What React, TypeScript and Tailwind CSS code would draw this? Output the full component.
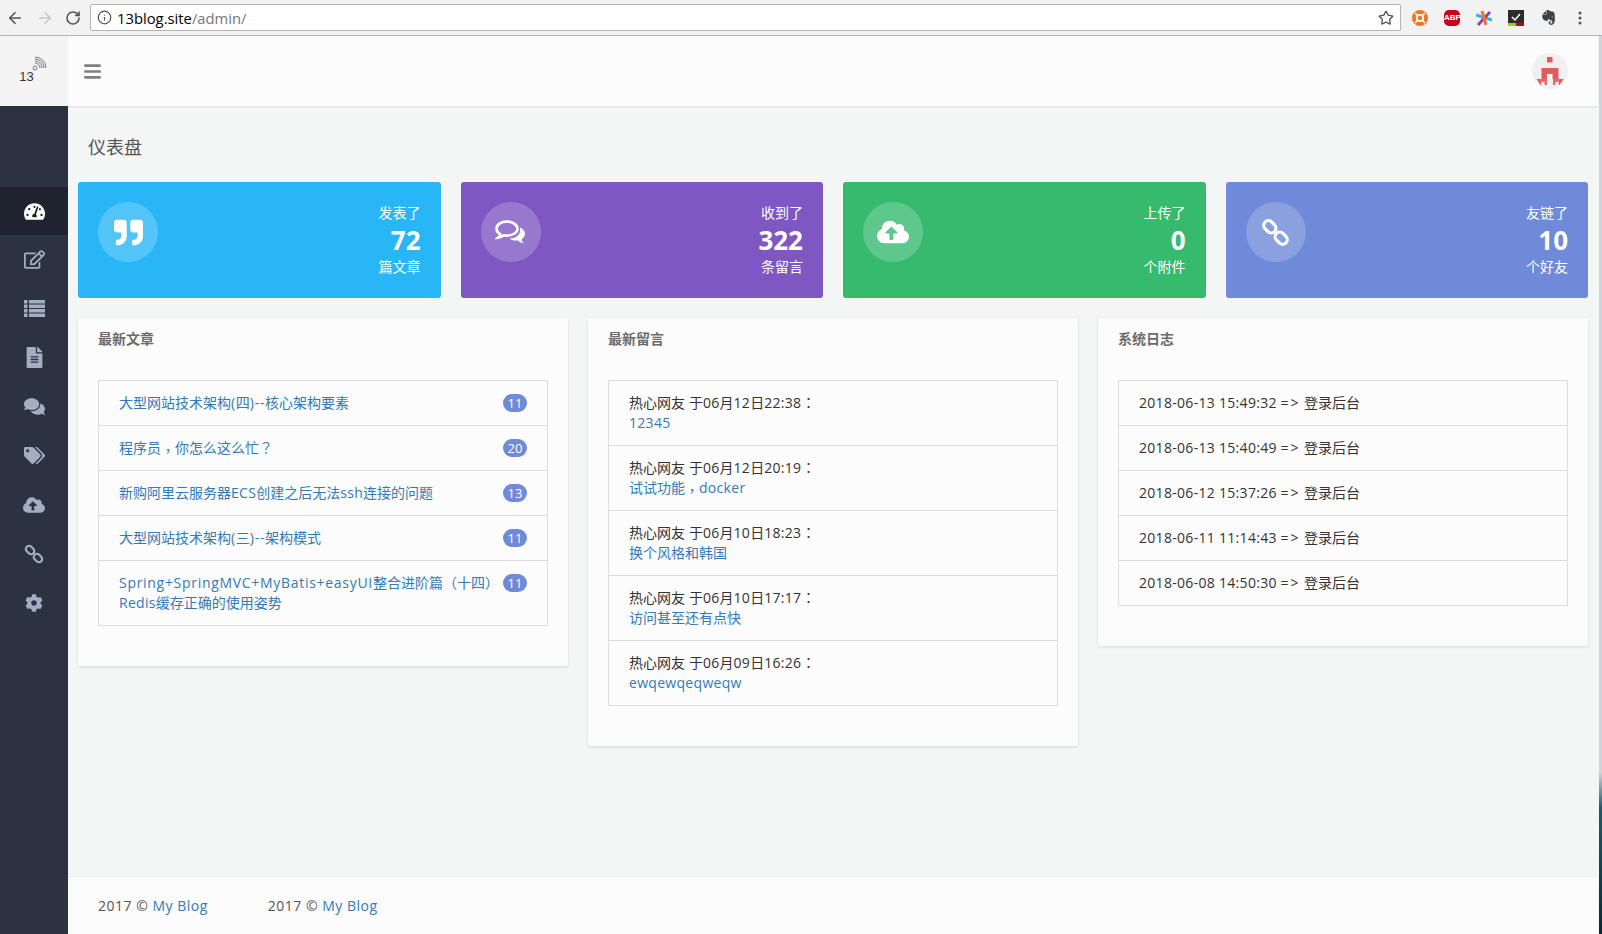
import React from "react";
import { FaTachometerAlt, FaFileAlt, FaComments, FaTags, FaCloudUploadAlt, FaCog, FaQuoteRight, FaBars, FaEvernote, FaRegEdit } from "react-icons/fa";
import { ArrowLeft, ArrowRight, RotateCw, Info, Star } from "lucide-react";

function T({ children }: { children: string }) {
  const runs = children.split(/([，？：（）]|[\u4e00-\u9fff]+)/).filter(Boolean);
  return (
    <>
      {runs.map((r, i) =>
        r === "，" ? (
          <span key={i} className="inline-block translate-y-[3px] [font-family:'Open_Sans','Noto_Sans_CJK_TC',sans-serif]">{r}</span>
        ) : /^[？：（）]$/.test(r) ? (
          <span key={i} className="[font-family:'Open_Sans','Noto_Sans_CJK_TC',sans-serif]">{r}</span>
        ) : /[\u4e00-\u9fff]/.test(r) ? (
          <span key={i}>{r}</span>
        ) : /[+()]/.test(r) ? (
          <span key={i} className="tracking-[0.7px]">{r}</span>
        ) : (
          <span key={i} className="tracking-[0.3px]">{r}</span>
        )
      )}
    </>
  );
}

function LinkIcon({ size, className }: { size: number; className?: string }) {
  return (
    <svg width={size} height={size} viewBox="0 0 28 28" className={className} fill="none" stroke="currentColor" strokeWidth="3">
      <rect x="4" y="2" width="9" height="13" rx="4.500" transform="rotate(-45 8.500 8.500)" />
      <rect x="15" y="13" width="9" height="13" rx="4.500" transform="rotate(-45 19.500 19.500)" />
    </svg>
  );
}

function CommentsIcon() {
  return (
    <svg width="31" height="24" viewBox="0 0 31 24">
      <path d="M12 1.500C6 1.500 1.500 4.800 1.500 8.800c0 2.300 1.500 4.300 3.800 5.600-.4 1.400-1.200 2.400-2.300 3.300 2.300-.3 4.300-1.200 5.800-2.400 1 .2 2.100.3 3.200.3 6 0 10.500-3.300 10.500-6.800S18 1.500 12 1.500z" fill="none" stroke="currentColor" strokeWidth="2.600" />
      <path d="M25 7.500c2.500 1.300 5 3.400 5 6.300 0 2.300-1.500 4.200-3.500 5.400.3 1.600 1.500 3 2.500 4-2.800-.2-5-1.400-6.500-2.900-1.600.4-5.500.5-8-1.800 6.500.2 12-4 10.500-11z" fill="currentColor" />
    </svg>
  );
}

function ListIcon({ className }: { className?: string }) {
  return (
    <svg width="21" height="17" viewBox="0 0 21 17" fill="currentColor" className={className}>
      {[0, 4.5, 9, 13.5].map((y) => (
        <g key={y}>
          <rect x="0" y={y} width="3.500" height="3.500" />
          <rect x="5" y={y} width="16" height="3.500" />
        </g>
      ))}
    </svg>
  );
}

const stats = [
  { bg: "bg-[#29b6f6]", top: "发表了", n: "72", bottom: "篇文章", icon: <FaQuoteRight className="text-[29px]" /> },
  { bg: "bg-[#7e57c2]", top: "收到了", n: "322", bottom: "条留言", icon: <CommentsIcon /> },
  { bg: "bg-[#36ba6e]", top: "上传了", n: "0", bottom: "个附件", icon: <FaCloudUploadAlt className="text-[32px]" /> },
  { bg: "bg-[#6e8ad8]", top: "友链了", n: "10", bottom: "个好友", icon: <LinkIcon size={29} /> },
];
const side = [
  <FaRegEdit className="text-[21px]" />,
  <ListIcon />,
  <FaFileAlt className="text-[21px]" />,
  <FaComments className="text-[21px]" />,
  <FaTags className="text-[21px]" />,
  <FaCloudUploadAlt className="text-[22px]" />,
  <LinkIcon size={20} />,
  <FaCog className="text-[18px]" />,
];
const posts = [
  ["大型网站技术架构(四)--核心架构要素", "11"],
  ["程序员，你怎么这么忙？", "20"],
  ["新购阿里云服务器ECS创建之后无法ssh连接的问题", "13"],
  ["大型网站技术架构(三)--架构模式", "11"],
  ["Spring+SpringMVC+MyBatis+easyUI整合进阶篇（十四）Redis缓存正确的使用姿势", "11"],
];
const comments = [
  ["热心网友 于06月12日22:38：", "12345"],
  ["热心网友 于06月12日20:19：", "试试功能，docker"],
  ["热心网友 于06月10日18:23：", "换个风格和韩国"],
  ["热心网友 于06月10日17:17：", "访问甚至还有点快"],
  ["热心网友 于06月09日16:26：", "ewqewqeqweqw"],
];
const logs = ["2018-06-13 15:49:32", "2018-06-13 15:40:49", "2018-06-12 15:37:26", "2018-06-11 11:14:43", "2018-06-08 14:50:30"];

function Panel({ title, children }: { title: string; children: React.ReactNode }) {
  return (
    <div className="flex-1 self-start bg-[#fcfcfc] rounded-[2px] shadow-[0_1px_3px_rgba(0,0,0,0.12)] px-5 pt-[11px] pb-10">
      <h3 className="text-[14px] leading-5 font-bold text-[#6b6b6b]">{title}</h3>
      <div className="mt-[31px] border border-[#dcdcdc] divide-y divide-[#dcdcdc]">{children}</div>
    </div>
  );
}

function Ext({ children }: { children: React.ReactNode }) {
  return <div className="w-[32px] flex items-center justify-center">{children}</div>;
}

function Toolbar() {
  return (
    <div className="h-[36px] bg-[#f2f2f2] border-b border-[#b4b4b4] flex items-center pl-[6px]">
      <ArrowLeft size={18} strokeWidth={2.2} className="text-[#555]" />
      <ArrowRight size={18} strokeWidth={2.2} className="text-[#c8c8c8] ml-[12px]" />
      <RotateCw size={16} strokeWidth={2.4} className="text-[#555] ml-[11px]" />
      <div className="ml-[9px] w-[1311px] shrink-0 h-[27px] bg-white border border-[#b5b5b5] rounded-[2px] flex items-center pl-[6px] pr-[6px] text-[14.8px]">
        <Info size={15} strokeWidth={2} className="text-[#555] mr-[5px]" />
        <span className="text-black">13blog.site</span>
        <span className="text-[#777]">/admin/</span>
        <Star size={16} strokeWidth={2} className="ml-auto text-[#555]" />
      </div>
      <div className="flex items-center pl-[3px]">
        <Ext>
          <svg width="16" height="16" viewBox="0 0 16 16"><circle cx="8" cy="8" r="8" fill="#f47421" /><circle cx="8" cy="8" r="3.200" fill="none" stroke="#fff" strokeWidth="1.800" /><path d="M3 3l2.500 2.500M13 3l-2.500 2.500M3 13l2.500-2.500M13 13l-2.500-2.500" stroke="#fff" strokeWidth="1.500" /></svg>
        </Ext>
        <Ext>
          <div className="w-[16px] h-[16px] rounded-[5px] bg-[#c4001a] text-white text-[8px] leading-4 font-bold text-center [font-family:'Liberation_Sans']">ABP</div>
        </Ext>
        <Ext>
          <svg width="16" height="16" viewBox="0 0 16 16"><path d="M0 5l16 5" stroke="#29b6f6" strokeWidth="3" /><path d="M2 15L14 2" stroke="#8e44ad" strokeWidth="3" /><path d="M6 1l4 14" stroke="#f47421" strokeWidth="3" /></svg>
        </Ext>
        <Ext>
          <svg width="16" height="16" viewBox="0 0 16 16"><rect width="16" height="13" fill="#2c2c2c" /><rect y="13" width="8" height="3" fill="#9ccc1c" /><rect x="8" y="13" width="8" height="3" fill="#a80f0f" /><path d="M4 7l3 3 5-6" fill="none" stroke="#fff" strokeWidth="1.500" /></svg>
        </Ext>
        <Ext>
          <FaEvernote className="text-[17px] text-[#3c4146]" />
        </Ext>
        <Ext>
          <svg width="4" height="14" viewBox="0 0 4 14"><circle cx="2" cy="2" r="1.500" fill="#555" /><circle cx="2" cy="7" r="1.500" fill="#555" /><circle cx="2" cy="12" r="1.500" fill="#555" /></svg>
        </Ext>
      </div>
    </div>
  );
}

export default function App() {
  return (
    <div className="w-[1602px] h-[934px] overflow-hidden flex flex-col bg-[#f4f5f5] text-[14px] leading-5 text-[#444] [font-family:'Open_Sans','Noto_Sans_CJK_SC',sans-serif]">
      <Toolbar />
      <div className="flex-1 flex min-h-0">
        <aside className="w-[68px] flex flex-col bg-[#2b3240]">
          <div className="h-[70px] bg-[#f4f4f4] flex flex-col items-center justify-center">
            <svg className="ml-[12px] -mt-[3px]" width="17" height="15" viewBox="0 0 17 15"><g fill="none" stroke="#777" strokeWidth="1"><circle cx="3" cy="12" r="2" /><path d="M3 7a5 5 0 0 1 5 5M3 5a7 7 0 0 1 7 7M3 3a9 9 0 0 1 9 9M3 1a11 11 0 0 1 11 11" /></g></svg>
            <span className="text-[13px] leading-3 text-[#333] mr-[15px] [font-family:'Liberation_Sans']">13</span>
          </div>
          <div className="mt-[81px] h-[48px] bg-[#1f2430] flex items-center justify-center">
            <FaTachometerAlt className="text-[21px] text-white" />
          </div>
          {side.map((icon, i) => (
            <div key={i} className="h-[49px] flex items-center justify-center text-[#a3aec2]">
              {icon}
            </div>
          ))}
        </aside>
        <div className="flex-1 flex flex-col min-w-0">
          <header className="h-[72px] bg-[#fcfcfc] border-b-[2px] border-[#e8e8e8] flex items-center justify-between pl-[15px] pr-[30px]">
            <FaBars className="text-[19px] text-[#7f7f7f]" />
            <svg width="36" height="36" viewBox="0 0 36 36" className="rounded-full">
              <rect width="36" height="36" fill="#f0f0f0" />
              <g fill="#e05c5c">
                <rect x="15" y="4" width="5.500" height="5.500" />
                <rect x="9.500" y="15" width="17" height="11" />
                <path d="M4.500 26h5v6H8.500zM26.500 26h5L27.500 32h-1z" />
                <rect x="9.500" y="26" width="5.500" height="6" opacity="0.9" />
                <rect x="21" y="26" width="5.500" height="6" opacity="0.9" />
              </g>
              <rect x="15" y="21" width="5.500" height="5" fill="#f8f8f8" />
              <rect x="9.500" y="29" width="3" height="3" fill="#f8f8f8" />
              <rect x="23.500" y="29" width="3" height="3" fill="#f8f8f8" />
            </svg>
          </header>
          <main className="flex-1 px-[10px] min-h-0">
            <h1 className="pt-[25px] pl-[10px] text-[18px] leading-[28px] text-[#555]">仪表盘</h1>
            <div className="mt-[21px] flex gap-5">
              {stats.map(({ bg, top, n, bottom, icon }) => (
                <div key={top} className={`${bg} flex-1 h-[116px] rounded-[3px] flex justify-between p-5 text-white`}>
                  <div className="w-[60px] h-[60px] rounded-full bg-white/20 flex items-center justify-center">
                    {icon}
                  </div>
                  <div className="text-right -mt-[1px]">
                    <div className="text-[14px] leading-[24px]">{top}</div>
                    <div className="text-[26px] leading-[30px] font-bold">{n}</div>
                    <div className="text-[14px] leading-[24px]">{bottom}</div>
                  </div>
                </div>
              ))}
            </div>
            <div className="mt-5 flex gap-5">
              <Panel title="最新文章">
                {posts.map(([t, c]) => (
                  <div key={t} className="flex items-start justify-between gap-[2px] px-5 py-3 text-[#337ab7]">
                    <span><T>{t}</T></span>
                    <span className="shrink-0 mt-[1px] w-6 h-[18px] rounded-[9px] bg-[#6e8ad8] text-white text-[13px] leading-[18px] text-center">{c}</span>
                  </div>
                ))}
              </Panel>
              <Panel title="最新留言">
                {comments.map(([a, b]) => (
                  <div key={a} className="px-5 py-3">
                    <div className="text-[#333]"><T>{a}</T></div>
                    <div className="text-[#337ab7]"><T>{b}</T></div>
                  </div>
                ))}
              </Panel>
              <Panel title="系统日志">
                {logs.map((l) => (
                  <div key={l} className="px-5 py-3 text-[#333]">
                    <T>{l}</T> <span className="tracking-[2px]">=&gt;</span> 登录后台
                  </div>
                ))}
              </Panel>
            </div>
          </main>
          <footer className="h-[58px] bg-[#fbfbfb] border-t border-[#ececec] flex items-center gap-[60px] pl-[30px] pt-[1px] tracking-[0.5px] text-[#555]">
            <span>2017 © <span className="text-[#337ab7]">My Blog</span></span>
            <span>2017 © <span className="text-[#337ab7]">My Blog</span></span>
          </footer>
        </div>
        <div className="w-[4px] border-l border-[#f4f5f5] bg-[linear-gradient(to_bottom,#d0d4d8_0%,#d0d4d8_82%,#1c5a66_86%,#0b2830_100%)]" />
      </div>
    </div>
  );
}
